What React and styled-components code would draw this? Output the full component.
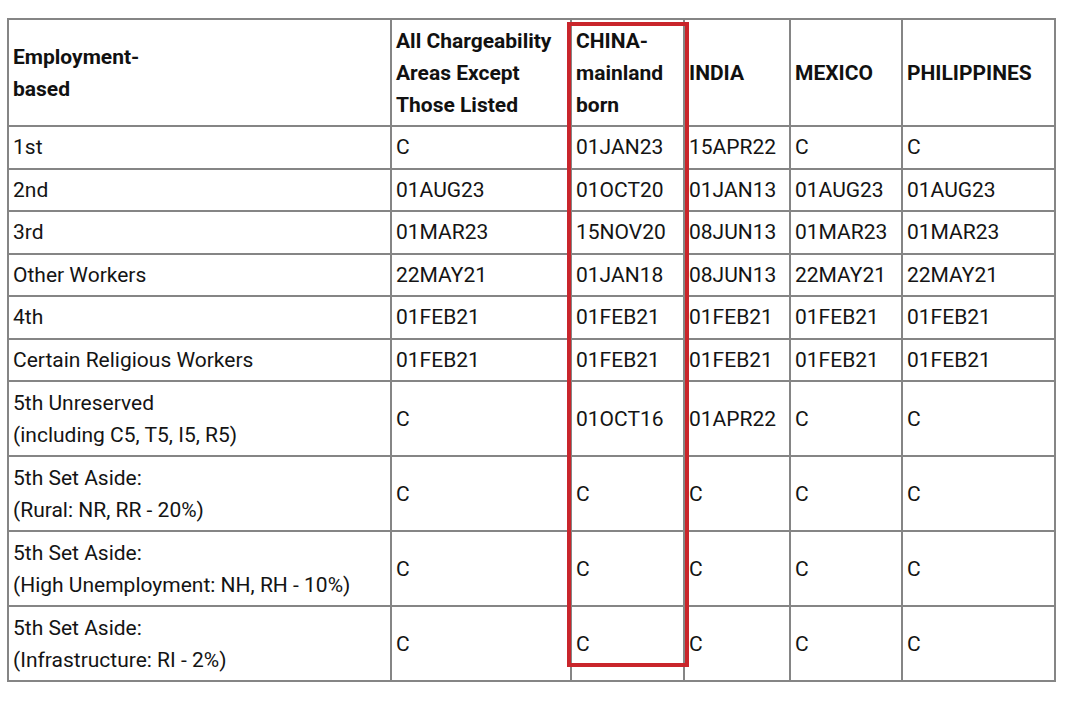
import styled, { createGlobalStyle } from "styled-components";

const GlobalStyle = createGlobalStyle`
  body {
    margin: 0;
    background: #ffffff;
    font-family: Roboto, "Liberation Sans", sans-serif;
    color: #141414;
  }
`;

const Page = styled.div`
  padding: 18px 0 0 7px;
`;

const Frame = styled.div`
  position: relative;
  width: 1047px;
`;

const Table = styled.table`
  border-collapse: collapse;
  width: 1047px;
  table-layout: fixed;
  font-size: 21px;
  line-height: 32px;
`;

const HeadCell = styled.th`
  border: 2px solid #858585;
  font-weight: 700;
  text-align: left;
  vertical-align: middle;
  padding: 0 4px;
  height: 105px;
  color: #111111;
`;

const Cell = styled.td`
  border: 2px solid #858585;
  vertical-align: middle;
  padding: 0 4px;
  height: ${(p) => (p.$tall ? "73px" : "40.5px")};
  white-space: nowrap;
`;

const Highlight = styled.div`
  position: absolute;
  left: 560px;
  top: 4px;
  width: 114px;
  height: 637px;
  border: 4.5px solid #c9252b;
  pointer-events: none;
`;

const columns = [
  { w: 383, label: ["Employment-", "based"] },
  { w: 180, label: ["All Chargeability", "Areas Except", "Those Listed"] },
  { w: 113, label: ["CHINA-", "mainland", "born"] },
  { w: 106, label: ["INDIA"] },
  { w: 112, label: ["MEXICO"] },
  { w: 153, label: ["PHILIPPINES"] },
];

const rows = [
  [["1st"], "C", "01JAN23", "15APR22", "C", "C"],
  [["2nd"], "01AUG23", "01OCT20", "01JAN13", "01AUG23", "01AUG23"],
  [["3rd"], "01MAR23", "15NOV20", "08JUN13", "01MAR23", "01MAR23"],
  [["Other Workers"], "22MAY21", "01JAN18", "08JUN13", "22MAY21", "22MAY21"],
  [["4th"], "01FEB21", "01FEB21", "01FEB21", "01FEB21", "01FEB21"],
  [["Certain Religious Workers"], "01FEB21", "01FEB21", "01FEB21", "01FEB21", "01FEB21"],
  [["5th Unreserved", "(including C5, T5, I5, R5)"], "C", "01OCT16", "01APR22", "C", "C"],
  [["5th Set Aside:", "(Rural: NR, RR - 20%)"], "C", "C", "C", "C", "C"],
  [["5th Set Aside:", "(High Unemployment: NH, RH - 10%)"], "C", "C", "C", "C", "C"],
  [["5th Set Aside:", "(Infrastructure: RI - 2%)"], "C", "C", "C", "C", "C"],
];

const lines = (parts) =>
  parts.map((t, i) => (
    <span key={i}>
      {i > 0 && <br />}
      {t}
    </span>
  ));

export default function App() {
  return (
    <>
      <GlobalStyle />
      <Page>
        <Frame>
          <Table>
            <colgroup>
              {columns.map((c, i) => (
                <col key={i} style={{ width: c.w }} />
              ))}
            </colgroup>
            <thead>
              <tr>
                {columns.map((c, i) => (
                  <HeadCell key={i}>{lines(c.label)}</HeadCell>
                ))}
              </tr>
            </thead>
            <tbody>
              {rows.map(([cat, ...vals], r) => {
                const tall = cat.length > 1;
                return (
                  <tr key={r}>
                    <Cell $tall={tall}>{lines(cat)}</Cell>
                    {vals.map((v, i) => (
                      <Cell key={i} $tall={tall}>
                        {v}
                      </Cell>
                    ))}
                  </tr>
                );
              })}
            </tbody>
          </Table>
          <Highlight />
        </Frame>
      </Page>
    </>
  );
}
